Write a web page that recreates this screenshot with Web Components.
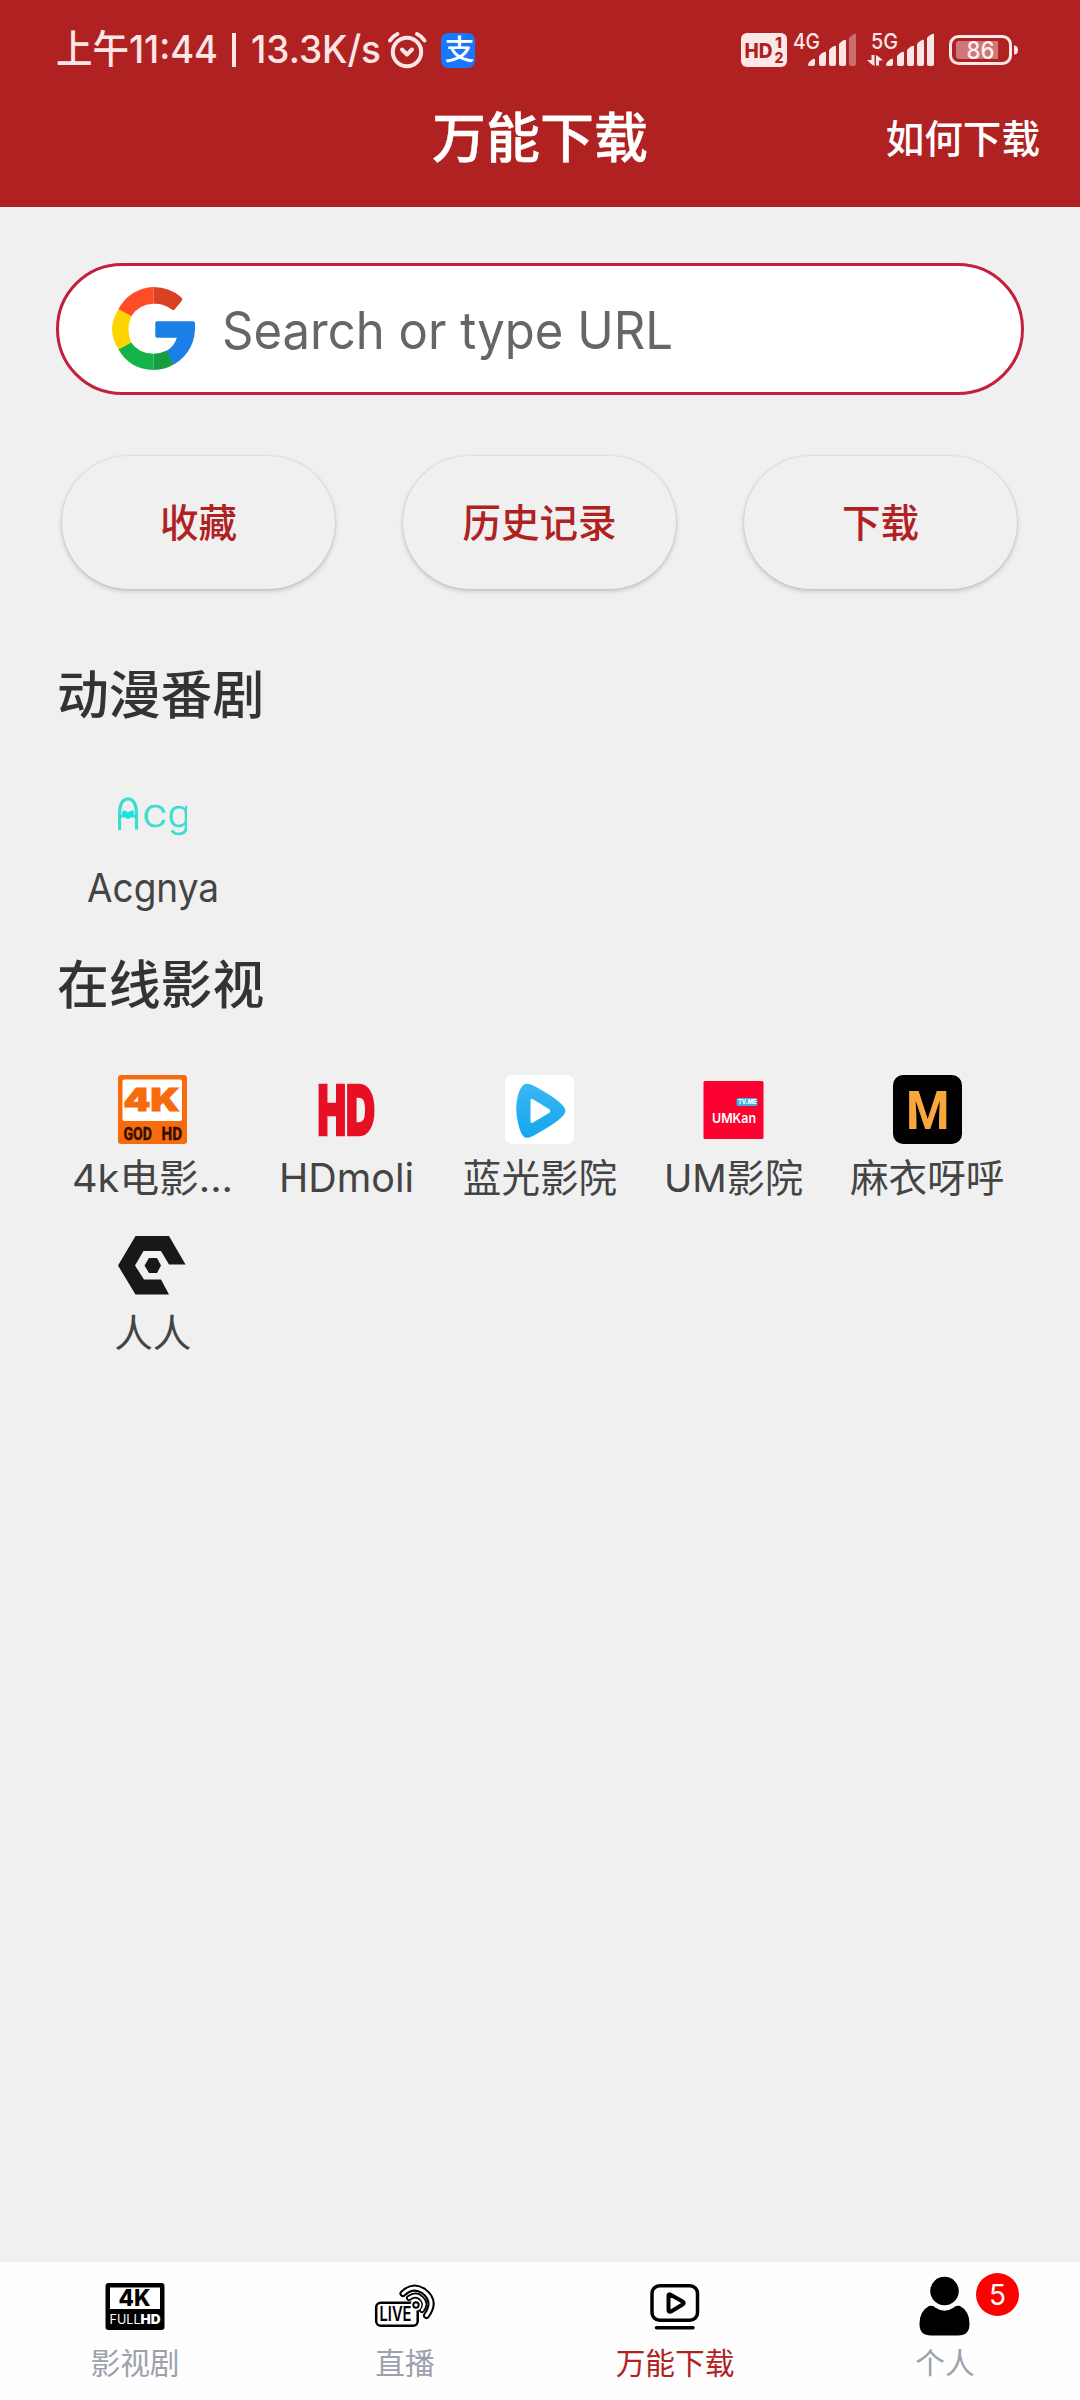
<!DOCTYPE html>
<html lang="zh-CN">
<head>
<meta charset="utf-8">
<meta name="viewport" content="width=device-width">
<title>万能下载</title>
<style>
html,body{margin:0;height:100%}
body{font-family:"Inter","Noto Sans CJK SC",sans-serif;background:#f0f0f0;color:#444}
</style>
</head>
<body>
<download-page></download-page>
<script>
const define=(name,html,setup)=>customElements.define(name,class extends HTMLElement{
  connectedCallback(){
    if(this.shadowRoot)return;
    const t=document.createElement('template');
    t.innerHTML=typeof html==='function'?html(this):html;
    this.attachShadow({mode:'open'}).appendChild(t.content.cloneNode(true));
    if(setup)setup(this,this.shadowRoot);
  }
});

/* One line of text stretched to a given advance width. */
define('fit-text',`<style>:host{display:inline-block;white-space:nowrap;text-align:left}span{display:inline-block;transform-origin:0 50%}</style><span><slot></slot></span>`,(el,root)=>{
  const w=+el.getAttribute('w'),s=root.querySelector('span');
  el.style.width=w+'px';
  const fit=()=>{s.style.transform='none';const n=s.getBoundingClientRect().width;if(n)s.style.transform=`scaleX(${w/n})`};
  root.querySelector('slot').addEventListener('slotchange',fit);
  fit();
});

const T=(x,y,size,len,txt,extra='')=>`<text x="${x}" y="${y}" font-size="${size}" textLength="${len}" lengthAdjust="spacingAndGlyphs" ${extra}>${txt}</text>`;

const icons={
alarm:[40,38,`<g fill="none" stroke="#fde6e6" stroke-width="4" stroke-linecap="round"><circle cx="20" cy="21" r="14.2"/><path d="M3 9.500Q6 5 10.500 3M30 3Q34.500 5 37.500 9.500"/><path d="M15 18.500L20 23.500L25 18.500" stroke-linejoin="round"/></g>`],
alipay:[34,35,`<rect width="34" height="35" rx="7" fill="#1777fe"/>${T(3.500,27,28,30,'支','fill="#fff" font-weight="500"')}`],
hd:[46,34,`<rect width="46" height="34" rx="6" fill="#fde8e8"/><g fill="#b02222" font-weight="800">${T(3.500,24.500,20,28,'HD')}${T(34,14.500,15,7,'1')}${T(33.500,29.500,15,9,'2')}</g>`],
sig4:[64,34,`<g fill="#fde6e6">${T(0,15.500,21,27,'4G','font-weight="500"')}<path d="M15 32q0-3 5-6q2-1 2 1v4q0 2-2 2h-3q-2 0-2-1zM26 23q5-5 7-4v12q0 2-2 2h-3q-2 0-2-2zM36 17q5-5 7-4v18q0 2-2 2h-3q-2 0-2-2zM46 11q5-5 7-4v24q0 2-2 2h-3q-2 0-2-2z"/><path d="M56 5q5-5 7-4v30q0 2-2 2h-3q-2 0-2-2z" opacity=".38"/></g>`],
sig5:[68,34,`<g fill="#fde6e6">${T(4,15.500,21,27,'5G','font-weight="500"')}<path d="M0 27h4.500V22H7.500v11q-4-2-7.500-6zM9 32.500V22q4 2 7 5.500h-4v5z"/><path d="M19 32q0-3 5-6q2-1 2 1v4q0 2-2 2h-3q-2 0-2-1zM30 23q5-5 7-4v12q0 2-2 2h-3q-2 0-2-2zM40 17q5-5 7-4v18q0 2-2 2h-3q-2 0-2-2zM50 11q5-5 7-4v24q0 2-2 2h-3q-2 0-2-2zM60 5q5-5 7-4v30q0 2-2 2h-3q-2 0-2-2z"/></g>`],
battery:[69,30,`<rect x="1.500" y="1.500" width="60" height="27" rx="8" fill="none" stroke="#fde6e6" stroke-width="3"/><path d="M7 9q0-3 3-3h39v18H10q-3 0-3-3z" fill="#d07878"/><path d="M65 10.500q4 0 4 4.500t-4 4.500z" fill="#fde6e6"/>${T(17.500,24,24,28,'86','fill="#fff0f0" font-weight="500"')}`],
google:[83,83,`<path d="M6.300 22.600A40.500 41.500 0 0 1 41.500 0V16.700Q26 17.500 19 29.500Z" fill="#ff4b26"/><path d="M41.500 0Q58 0 69.500 10.500Q71 12 69.800 13.800L63 22Q61.500 24 59.700 22.500Q52 16.300 41.500 16.700Z" fill="#d94123"/><path d="M6.500 22.200L19.500 29Q13.500 42 19.200 55.500L6.500 62.500Q-6.500 42 6.500 22.200Z" fill="#ffd500"/><path d="M6.500 62.500L19.200 55.500Q26.500 66.500 41.500 66.700V83Q18 82.500 6.500 62.500Z" fill="#12b347"/><path d="M41.500 66.700Q49 66.500 54.800 63.500L62 77.300Q53 83 41.500 83Z" fill="#159d3f"/><path d="M45 34.300H81.500Q83 34.300 83 36.500Q84.500 63.500 62 77.500L54.500 64Q62.500 59 64.800 50.700H45Q43.300 50.700 43.300 49V36Q43.300 34.300 45 34.300Z" fill="#1a7fe6"/>`],
acg:[69,69,`<g fill="none" stroke="#35ddd2" stroke-width="3.200"><path d="M1.500 45V30Q1.500 14 10 14T18.500 30V44.500"/><path d="M2 31H18"/></g><path d="M10 34.500L4 29Q3.500 25 7 25.500L10 27.500L13 25.500Q17 25 16 29Z" fill="#12e7e0"/><g fill="#35ddd2" font-family="Roboto" font-weight="300" stroke="#35ddd2" stroke-width=".5">${T(24.500,42,40,24,'c')}${T(49.500,42,38,23,'g')}</g>`],
god:[69,69,`<rect width="69" height="69" rx="3" fill="#f76b0c"/><rect x="4.500" y="4.500" width="59.500" height="41.500" rx="2" fill="#fff"/>${T(5.500,36,31,56,'4K','fill="#f76b0c" font-weight="900" stroke="#f76b0c" stroke-width="1"')}<g font-family="Roboto" font-weight="700" fill="#301000" stroke="#301000" stroke-width=".5">${T(5.500,64.500,19,28.500,'GOD')}${T(43.500,64.500,19,20.500,'HD')}</g>`],
hdmoli:[69,69,`<g transform="translate(5.500 59.500) scale(.62 1)" font-weight="900" fill="#e60f23" stroke="#e60f23" stroke-width="2.500">${T(0,0,69,46,'H')}${T(46,0,69,47,'D')}</g>`],
blue:[69,69,`<defs><linearGradient id="b" x2="0" y2="1"><stop stop-color="#3cb6f4"/><stop offset="1" stop-color="#12a7ed"/></linearGradient></defs><rect width="69" height="69" rx="7" fill="#fff"/><path d="M20 9Q24 7.500 32 12.500Q60 28 60.500 36Q60 43 34 57.500Q24 64 20 62.500Q16 61 13 48Q9.500 33 13 20Q16 10.500 20 9Z" fill="url(#b)"/><path d="M27.500 24Q25.500 23 25.500 26V46Q25.500 49 28 47.500L44 38Q46.500 36 44 34Z" fill="#fff"/>`],
um:[69,69,`<rect x="4.500" y="6" width="60" height="58" rx="1.500" fill="#fc002f"/><rect x="37.500" y="23" width="21" height="8" rx="2" fill="#38b4e8"/>${T(39,29.300,6.500,18.500,'TV.ME','fill="#fff" font-weight="800"')}${T(13,47.500,13.500,44,'UMKan','fill="#fff" font-weight="600"')}`],
mayi:[69,69,`<rect width="69" height="69" rx="10" fill="#000"/>${T(13,53.500,53,43.500,'M','fill="#f9a63a" font-family="Roboto" font-weight="700"')}`],
renren:[69,69,`<path fill="#181818" d="M17.500 6H51L67.500 34.500H51L43 21H25.500L17 35.500L26 49.500H43L51 64.500H17.500L0 35.500ZM31 28H39L43 35.500L39 43H31L26.500 35.500Z"/>`],
k4:[60,60,`<rect x=".5" y="7" width="59" height="47" rx="3" fill="#000"/><rect x="5" y="11.500" width="50" height="21.500" fill="#fff"/>${T(13.500,30,23,32,'4K','font-weight="800"')}<g fill="#fff">${T(4.500,47.500,13,31,'FULL')}${T(35.500,47.500,13,20,'HD','font-weight="900"')}</g>`],
live:[60,60,`<g fill="none"><g stroke-linecap="round"><path d="M28 17.500Q38 8 48.500 15Q62 25 51.500 39.500" stroke="#000" stroke-width="7"/><path d="M28 17.500Q38 8 48.500 15Q62 25 51.500 39.500" stroke="#fff" stroke-width="3"/><path d="M34 22Q41 17 46 22Q52 27.500 47 34" stroke="#000" stroke-width="6"/><path d="M34 22Q41 17 46 22Q52 27.500 47 34" stroke="#fff" stroke-width="2.400"/></g><rect x="1.200" y="26.800" width="41.500" height="23" rx="4.500" fill="#fff" stroke="#000" stroke-width="2.500"/><circle cx="41" cy="29" r="5.500" fill="#fff"/><circle cx="41" cy="29" r="2.700" stroke="#000" stroke-width="2"/></g>${T(4.500,45,20,32,'LIVE','font-weight="600"')}`],
play:[60,60,`<g fill="none" stroke="#000" stroke-linejoin="round" stroke-linecap="round"><rect x="7" y="9.700" width="45.500" height="34.500" rx="7.500" stroke-width="3.500"/><path d="M23.500 19.500Q23.500 17.500 26 19L38 25.800Q39.500 27 38 28.200L26 35.500Q23.500 36.500 23.500 34Z" stroke-width="4"/><path d="M11.500 51.700H48" stroke-width="3.600"/></g>`],
user:[60,60,`<circle cx="29.500" cy="15" r="14.300"/><path d="M14 30Q18 29 21 32Q29.500 37.500 38 32Q41 29 45 30Q54.500 35 54.500 48Q54.500 59.500 43 59.500H16Q4.500 59.500 4.500 48Q4.500 35 14 30Z"/>`]
};
define('app-icon',el=>{
  const name=el.getAttribute('name'),[w,h,b]=icons[name];
  return `<style>:host{display:block;flex:none;width:${w}px;height:${h}px}svg{display:block;overflow:visible}</style><svg width="${w}" height="${h}" viewBox="0 0 ${w} ${h}"${name==='acg'?' style="overflow:hidden"':''}>${b}</svg>`;
});

define('status-bar',`<style>
:host{display:flex;height:100px;padding:0 62px 0 56px;justify-content:space-between;align-items:center;color:#fde6e6;font-size:38.500px;font-weight:500;line-height:50px}
div{display:flex;align-items:center}
fit-text{margin-top:-2px}
i{width:4px;height:34px;margin:0 15px 0 14px;background:currentColor}
.l app-icon[name=alarm]{margin:-1px 0 0 6px}.l app-icon[name=alipay]{margin:0 0 0 14px}
.r app-icon[name=hd]{margin-right:1px}.r app-icon[name=sig4]{margin-left:5px}.r app-icon[name=sig5]{margin-left:10px}.r app-icon[name=battery]{margin-left:14px}
</style><div class="l"><fit-text w="73">上午</fit-text><fit-text w="89">11:44</fit-text><i></i><fit-text w="130">13.3K/s</fit-text><app-icon name="alarm"></app-icon><app-icon name="alipay"></app-icon></div>
<div class="r"><app-icon name="hd"></app-icon><app-icon name="sig4"></app-icon><app-icon name="sig5"></app-icon><app-icon name="battery"></app-icon></div>`);

define('app-header',`<style>
:host{display:block;height:207px;background:#b02222;color:#fff;flex:none}
nav{display:grid;grid-template-columns:1fr auto 1fr;align-items:center;height:78px;padding:0 40px}
h1{margin:0;grid-column:2;font-size:54px;font-weight:500;line-height:78px;-webkit-text-stroke:.4px #fff}
a{justify-self:end;font-size:38.600px;font-weight:500;line-height:60px}
</style><status-bar></status-bar><nav><h1><slot></slot></h1><a><slot name="action"></slot></a></nav>`);

define('search-box',`<style>
:host{display:flex;align-items:center;box-sizing:border-box;height:132px;border:3px solid #c4203c;border-radius:66px;background:#fff;padding-left:53px;gap:27px;color:#666;font-size:51.500px;line-height:70px}
app-icon{margin-top:-2px}fit-text{margin-top:1px}
</style><app-icon name="google"></app-icon><fit-text w="451"><slot></slot></fit-text>`);

define('pill-button',`<style>
:host{display:flex;align-items:center;justify-content:center;width:273px;height:132px;padding-top:1px;border-radius:67px;background:#f0f0f0;color:#b02222;font-size:38.500px;font-weight:500;line-height:60px;box-shadow:0 2px 5px rgba(0,0,0,.2),0 0 2px rgba(0,0,0,.12)}
</style><slot></slot>`);

define('site-section',`<style>
:host{display:block}
h2{margin:0;padding-left:1px;font-size:51.800px;font-weight:500;line-height:80px;color:#333}
.g{display:grid;grid-template-columns:repeat(5,1fr);grid-auto-rows:155px;padding-top:50px}
</style><h2><slot name="title"></slot></h2><div class="g"><slot></slot></div>`);

define('site-item',el=>`<style>
:host{display:flex;flex-direction:column;align-items:center;font-size:38.600px;line-height:50px;color:#444}
p{margin:9px 0 0;white-space:nowrap}
</style><app-icon name="${el.getAttribute('icon')}"></app-icon><p><slot></slot></p>`);

define('tab-item',el=>`<style>
:host{display:flex;flex-direction:column;align-items:center;flex:1;padding-top:14px;font-size:29.700px;line-height:40px;color:#9ca1ab}
:host([active]){color:#b02222}
.i{position:relative}p{margin:7px 0 0}
b{position:absolute;left:61px;top:-3px;width:43px;height:43px;border-radius:50%;background:#f00;color:#fff;font-size:28px;font-weight:400;line-height:44px;text-align:center}
</style><div class="i"><app-icon name="${el.getAttribute('icon')}"></app-icon>${el.hasAttribute('badge')?`<b>${el.getAttribute('badge')}</b>`:''}</div><p><slot></slot></p>`);

define('download-page',`<style>
:host{display:flex;flex-direction:column;width:1080px;height:2400px;overflow:hidden;background:#f0f0f0}
main{flex:1;padding:56px 56px 0}
.pills{display:flex;gap:68px;padding:61px 6px 66px}
footer{display:flex;height:138px;background:#fefefe}
site-section+site-section{margin-top:5px}
</style>
<app-header>万能下载<span slot="action">如何下载</span></app-header>
<main>
<search-box>Search or type URL</search-box>
<div class="pills"><pill-button>收藏</pill-button><pill-button>历史记录</pill-button><pill-button>下载</pill-button></div>
<site-section><span slot="title">动漫番剧</span><site-item icon="acg"><fit-text w="132" style="font-size:40px">Acgnya</fit-text></site-item></site-section>
<site-section><span slot="title">在线影视</span>
<site-item icon="god"><fit-text w="161">4k电影...</fit-text></site-item>
<site-item icon="hdmoli"><fit-text w="135" style="font-size:40px">HDmoli</fit-text></site-item>
<site-item icon="blue">蓝光影院</site-item>
<site-item icon="um"><fit-text w="139">UM影院</fit-text></site-item>
<site-item icon="mayi">麻衣呀呼</site-item>
<site-item icon="renren">人人</site-item></site-section>
</main>
<footer><tab-item icon="k4">影视剧</tab-item><tab-item icon="live">直播</tab-item><tab-item icon="play" active>万能下载</tab-item><tab-item icon="user" badge="5">个人</tab-item></footer>`);
</script>
</body>
</html>
